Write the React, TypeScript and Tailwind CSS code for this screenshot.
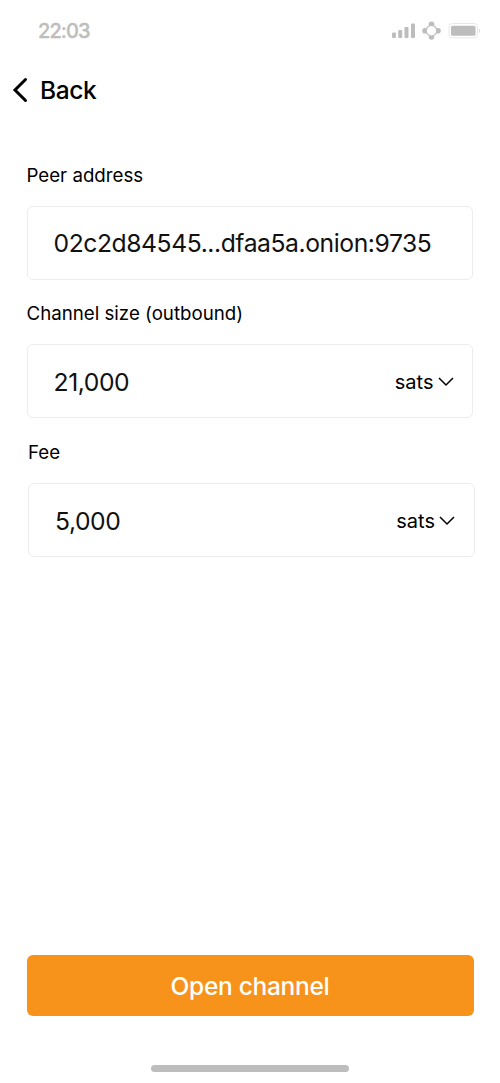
import React from "react";

function StatusBar() {
  return (
    <div className="flex h-[60px] items-center justify-between pl-[38px] pr-[20px] text-[#bdbdbd]">
      <span className="pt-[1px] text-[20px] font-medium leading-6 tracking-[-0.900px] [-webkit-text-stroke:0.300px_#bdbdbd]">22:03</span>
      <svg width="88" height="20" viewBox="392 20 88 20" fill="none">
        <g fill="#bdbdbd">
          <rect x="392" y="32.500" width="4" height="5.500" rx="1" />
          <rect x="398.200" y="30" width="4" height="8" rx="1" />
          <rect x="404.500" y="27" width="4" height="11" rx="1" />
          <rect x="411" y="23.500" width="4" height="14.500" rx="1" />
          <rect x="451" y="25.700" width="24.500" height="10" rx="1.500" />
          <path d="M478.800 28.500v4.500q1.500-.8 1.500-2.200t-1.500-2.300z" opacity=".5" />
          <circle cx="431.500" cy="24.300" r="2.800" />
          <circle cx="431.500" cy="37" r="2.800" />
          <circle cx="425" cy="30.700" r="2.800" />
          <circle cx="438" cy="30.700" r="2.800" />
        </g>
        <rect x="449" y="23.500" width="28.500" height="14.300" rx="3.500" stroke="#e8e8e8" />
        <circle cx="431.500" cy="30.700" r="5.300" fill="white" stroke="#bdbdbd" strokeWidth="1.200" />
      </svg>
    </div>
  );
}

interface FieldProps {
  label: string;
  value: string;
  unit?: string;
  shifted?: boolean;
}

function Field({ label, value, unit, shifted }: FieldProps) {
  return (
    <div className={shifted ? "ml-[28px] w-[446.500px]" : "ml-[26.500px] w-[446.500px]"}>
      <div className="h-[43px] pt-[1px] text-[18.700px] leading-6">{label}</div>
      <div className="flex h-[74px] items-center justify-between rounded-[6px] border border-[#ececec] pl-[26px] pr-[18.500px]">
        <span className="pt-[2px] text-[24.700px] tracking-[-0.430px] text-[#111]">{value}</span>
        {unit && (
          <span className="flex items-center gap-[4px] pt-[1px] text-[20px]">
            {unit}
            <svg width="16" height="10" viewBox="0 0 16 10" fill="none">
              <path d="M1 1l7 7 7-7" stroke="currentColor" strokeWidth="1.500" />
            </svg>
          </span>
        )}
      </div>
    </div>
  );
}

export default function App() {
  return (
    <main className="flex h-[1083px] w-[500px] flex-col bg-white font-['Inter',sans-serif] text-black">
      <StatusBar />
      <button className="flex h-[60px] items-center gap-[12px] pl-[12px] text-[24.500px] font-medium tracking-[-0.400px]">
        <svg width="16" height="26" viewBox="0 0 16 26" fill="none">
          <path d="M13.500 2.500L3 13l10.500 10.500" stroke="currentColor" strokeWidth="3" strokeLinecap="round" />
        </svg>
        <span className="pt-[1px]">Back</span>
      </button>
      <div className="mt-[42.600px] flex flex-col gap-[21.800px]">
        <Field label="Peer address" value="02c2d84545...dfaa5a.onion:9735" />
        <Field label="Channel size (outbound)" value="21,000" unit="sats" />
        <Field label="Fee" value="5,000" unit="sats" shifted />
      </div>
      <button className="mx-[26.500px] mb-[49px] mt-auto h-[61px] rounded-[6px] bg-[#f7931a] pt-[1px] text-[24.500px] font-medium tracking-[-0.300px] text-white">
        Open channel
      </button>
      <div className="mb-[11px] h-[7px] w-[198px] self-center rounded-full bg-[#bdbdbd]" />
    </main>
  );
}
